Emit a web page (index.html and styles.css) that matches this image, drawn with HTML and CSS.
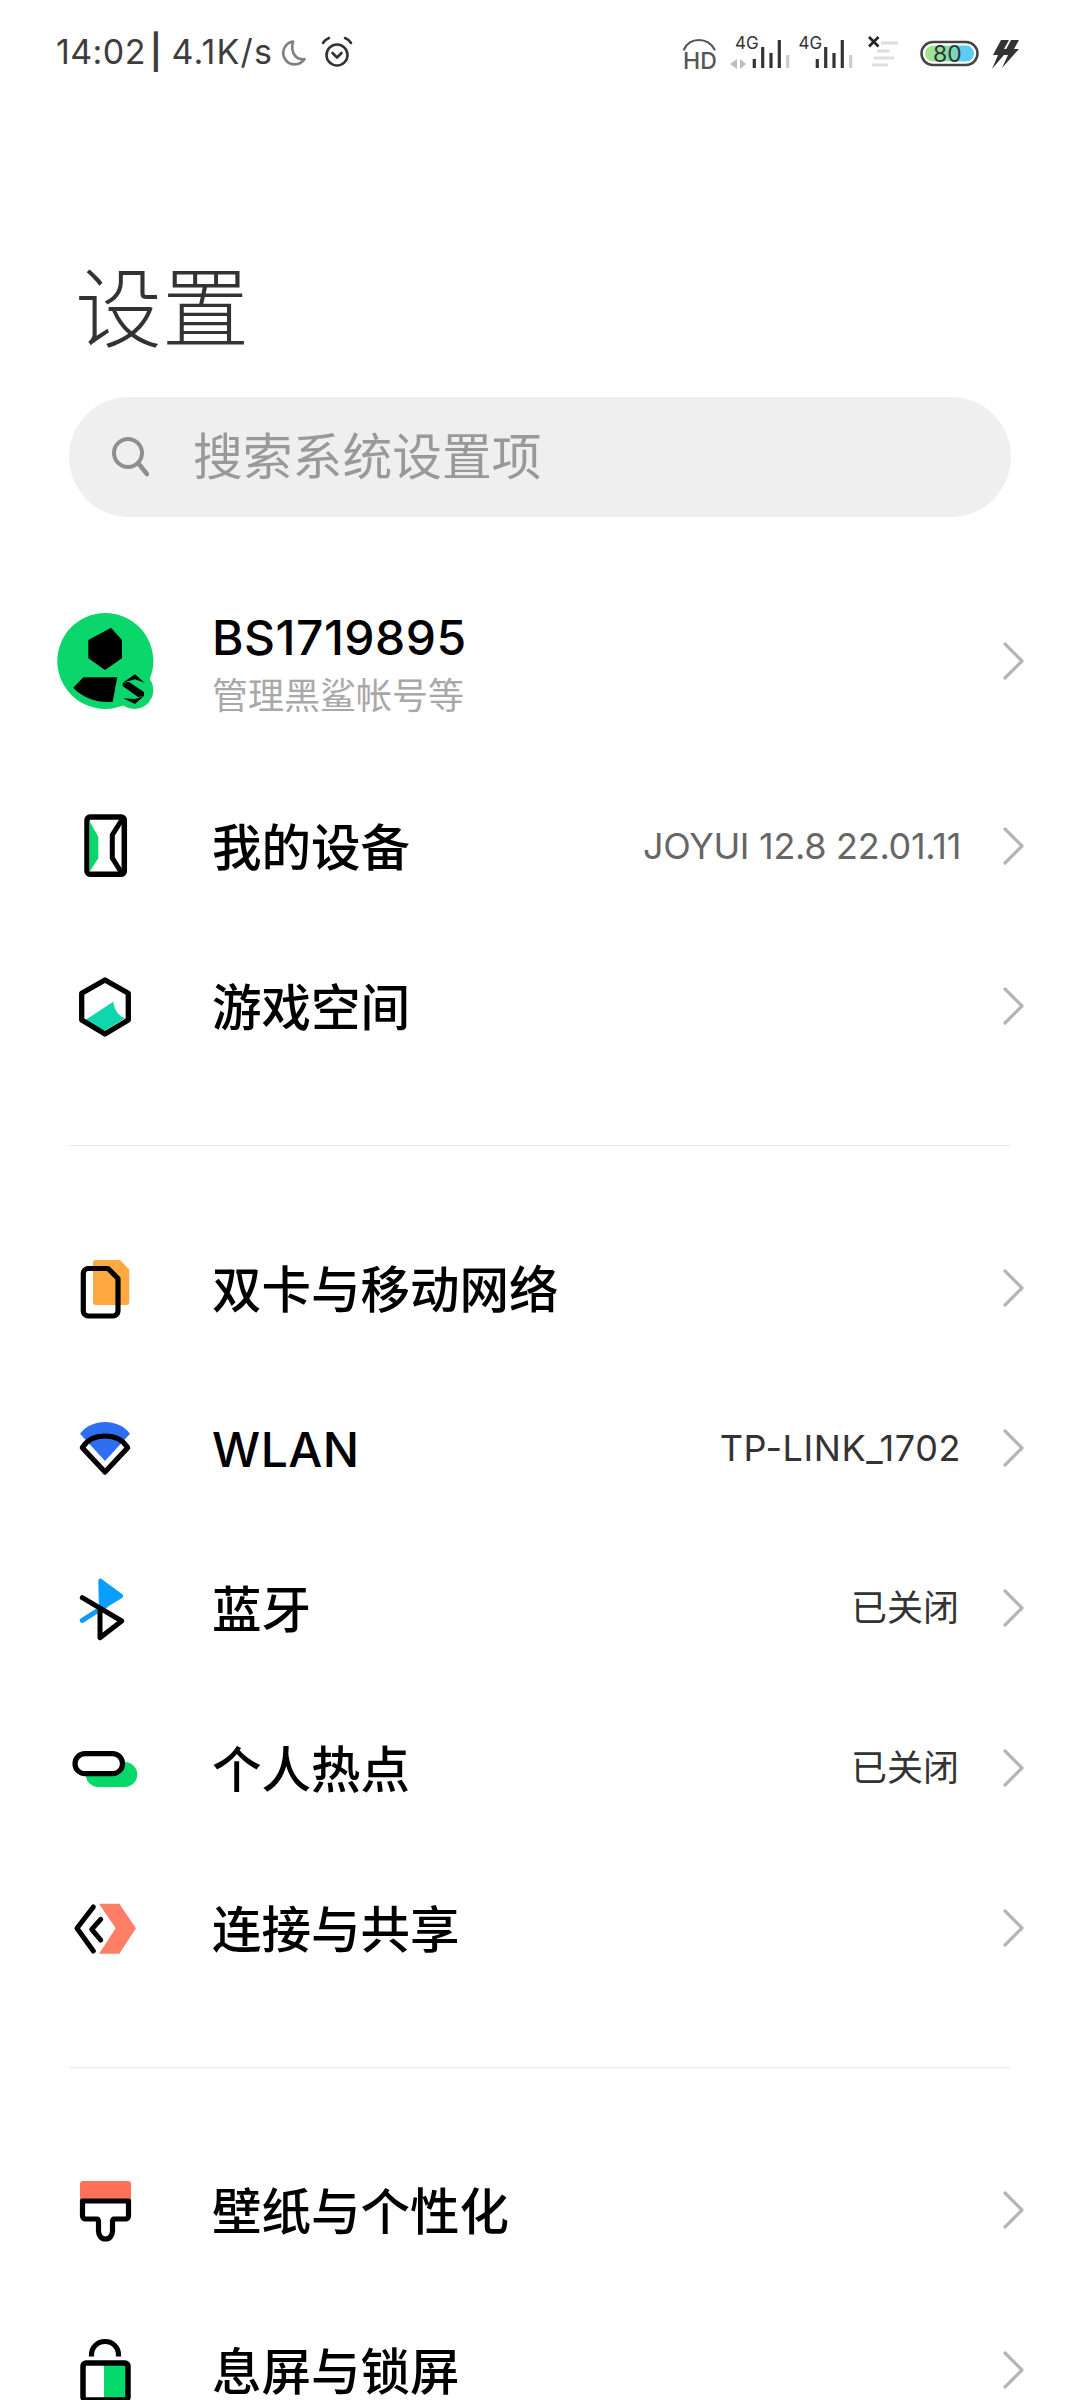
FILE: index.html
```html
<!DOCTYPE html>
<html lang="zh-CN">
<head>
<meta charset="utf-8">
<title>设置</title>
<link rel="stylesheet" href="styles.css">
</head>
<body>
<div class="page">
  <header class="status">
    <div class="status-left">
      <span class="status-text">14:02</span>
      <span class="status-text status-sep">|</span>
      <span class="status-text status-speed">4.1K/s</span>
      <svg class="st-moon" viewBox="270 36 30 32"><path d="M284 41.5a11.5 11.5 0 1 0 11.5 17.5c-8 1.500-14.500-6-11.500-17.500z" fill="none" stroke="#808080" stroke-width="2.600" stroke-linejoin="round"/></svg>
      <svg class="st-alarm" viewBox="310 36 36 34"><circle cx="328" cy="56" r="10.500" fill="none" stroke="#333" stroke-width="2.600"/><path d="M323.500 54l4.500 4.500 4.500-4.500M314 44c1.500-2.500 3.500-4 6-5M342 44c-1.500-2.500-3.500-4-6-5" fill="none" stroke="#333" stroke-width="2.600" stroke-linecap="round" stroke-linejoin="round"/></svg>
    </div>
    <div class="status-right">
      <svg class="st-hd" viewBox="680 20 40 60"><path d="M684 47.500c3-6.500 8.500-9.500 15-9.500s12 3 15.500 9.500" fill="none" stroke="#555" stroke-width="2.200" stroke-linecap="round"/><text x="683" y="67" class="st-label st-label-hd">HD</text></svg>
      <svg class="st-sig1" viewBox="725 20 70 60"><text x="735" y="47" class="st-label st-label-4g">4G</text><path d="M737 57v10l-7-5zM740 57v10l6-5z" fill="#bdbdbd"/><path d="M754.300 57v9M762.700 45v21M771 51v15M779.300 38v28" stroke="#333" stroke-width="3.200" fill="none"/><path d="M787.700 53v13" stroke="#ccc" stroke-width="3.200" fill="none"/></svg>
      <svg class="st-sig2" viewBox="795 20 62 60"><text x="798.500" y="47" class="st-label st-label-4g">4G</text><path d="M817.300 57v9M825.700 45v21M834 51v15M842.300 38v28" stroke="#333" stroke-width="3.200" fill="none"/><path d="M850.700 53v13" stroke="#ccc" stroke-width="3.200" fill="none"/></svg>
      <svg class="st-wifi" viewBox="862 20 40 60"><path d="M881 41h17M877 49h12.500M874 56h20M872 63h16" stroke="#dedede" stroke-width="2.800" fill="none"/><path d="M869 35l9.500 9.500M878.500 35l-9.500 9.500" stroke="#222" stroke-width="2.600" fill="none"/></svg>
      <svg class="st-batt" viewBox="916 20 66 60"><defs><linearGradient id="battfill" x1="0" x2="1" y1="0" y2="0"><stop offset="0" stop-color="#a5e58c"/><stop offset="0.55" stop-color="#7fdcae"/><stop offset="0.75" stop-color="#58cff2"/><stop offset="1" stop-color="#58cff2"/></linearGradient></defs><rect x="921.500" y="40" width="56" height="23" rx="11.500" fill="#fff" stroke="#444" stroke-width="2.500"/><rect x="925" y="43.500" width="49" height="16" rx="8" fill="url(#battfill)"/><text x="933" y="60" class="st-label st-label-batt">80</text></svg>
      <svg class="st-bolt" viewBox="988 20 34 60"><path d="M1001 38h8l-5 9h5l-17 20 6-14h-5zM1011 38h8l-5 9h5l-17 19 6-13h-5z" fill="#333"/></svg>
    </div>
  </header>

  <h1 class="page-title">设置</h1>

  <div class="search">
    <svg class="search-icon" viewBox="0 0 38 42"><circle cx="17" cy="17" r="14" fill="none" stroke="#8f8f8f" stroke-width="4"/><path d="M27 27l9 11" stroke="#8f8f8f" stroke-width="4.500" stroke-linecap="round"/></svg>
    <span class="search-text">搜索系统设置项</span>
  </div>

  <section class="group group-first">
    <div class="row row-account">
      <svg class="row-icon" viewBox="0 0 120 120">
        <circle cx="55.300" cy="60" r="48" fill="#0ad66c"/>
        <path d="M61 26.700l11 12.300v18.300L55 69 38.300 57.300V39z" fill="#000"/>
        <path d="M33.300 76.300h34l-4.600 24.400c-14 1.500-29-3-39.400-14z" fill="#000"/>
        <circle cx="84.300" cy="89" r="19" fill="#0ad66c"/>
        <path d="M72.700 81.700L85 73.300l9.700 8.400-9.700-3.400zM72.700 82l6.300-1 15 10v4l-6 1-15.300-11zM94 95l-9 8-11.700-5.700L85 98z" fill="#000"/>
      </svg>
      <div class="row-body row-body-account">
        <div class="row-title row-title-latin">BS1719895</div>
        <div class="row-sub">管理黑鲨帐号等</div>
      </div>
      <svg class="chevron" viewBox="0 0 24 40"><path d="M3 3l17 17L3 37" fill="none" stroke="#b5b5b5" stroke-width="3.200" stroke-linecap="round" stroke-linejoin="round"/></svg>
    </div>
    <div class="row">
      <svg class="row-icon" viewBox="0 0 120 120">
        <rect x="37" y="31" width="37.300" height="57.300" rx="3" fill="#fff" stroke="#000" stroke-width="5.500"/>
        <path d="M39.300 34.700l9 16v21.600l-9 14z" fill="#0ad66c"/>
        <path d="M71.700 34L62.300 49v23l9.400 15" fill="none" stroke="#000" stroke-width="5"/>
      </svg>
      <div class="row-body"><div class="row-title">我的设备</div></div>
      <span class="row-value row-value-muted">JOYUI 12.8 22.01.11</span>
      <svg class="chevron" viewBox="0 0 24 40"><path d="M3 3l17 17L3 37" fill="none" stroke="#b5b5b5" stroke-width="3.200" stroke-linecap="round" stroke-linejoin="round"/></svg>
    </div>
    <div class="row">
      <svg class="row-icon" viewBox="0 0 120 120">
        <path d="M34.300 74.700l29-19c1 8 5 14 11.700 16.600L55 84.700z" fill="#0fd6ac"/>
        <path d="M55 34l23.300 13.300V74L55 88 31.700 74V47.300z" fill="none" stroke="#000" stroke-width="5.300" stroke-linejoin="round"/>
      </svg>
      <div class="row-body"><div class="row-title">游戏空间</div></div>
      <svg class="chevron" viewBox="0 0 24 40"><path d="M3 3l17 17L3 37" fill="none" stroke="#b5b5b5" stroke-width="3.200" stroke-linecap="round" stroke-linejoin="round"/></svg>
    </div>
  </section>

  <hr class="divider">

  <section class="group">
    <div class="row">
      <svg class="row-icon" viewBox="0 0 120 120">
        <path d="M46 32h24l9.300 9.500V74a3 3 0 0 1-3 3H46a3 3 0 0 1-3-3V35a3 3 0 0 1 3-3z" fill="#ffa940"/>
        <path d="M37.500 40.500H58l10 10V83a5 5 0 0 1-5 5H38.300a5 5 0 0 1-5-5V45.500a5 5 0 0 1 5-5z" fill="none" stroke="#000" stroke-width="5.200" stroke-linejoin="round"/>
      </svg>
      <div class="row-body"><div class="row-title">双卡与移动网络</div></div>
      <svg class="chevron" viewBox="0 0 24 40"><path d="M3 3l17 17L3 37" fill="none" stroke="#b5b5b5" stroke-width="3.200" stroke-linecap="round" stroke-linejoin="round"/></svg>
    </div>
    <div class="row">
      <svg class="row-icon" viewBox="0 0 120 120">
        <path d="M30 45.700C36 38 45 34 55 34s19 4 25 11.700L55 73z" fill="#2e6ff2"/>
        <path d="M32.300 59.700C37 52 45 48 55 48s18 4 22.700 11.700L55 84z" fill="none" stroke="#000" stroke-width="5.200" stroke-linejoin="round"/>
      </svg>
      <div class="row-body"><div class="row-title row-title-latin">WLAN</div></div>
      <span class="row-value row-value-wide">TP-LINK_1702</span>
      <svg class="chevron" viewBox="0 0 24 40"><path d="M3 3l17 17L3 37" fill="none" stroke="#b5b5b5" stroke-width="3.200" stroke-linecap="round" stroke-linejoin="round"/></svg>
    </div>
    <div class="row">
      <svg class="row-icon" viewBox="0 0 120 120">
        <path d="M48.300 33c0-2 1.700-3 3.300-2l20.400 15c1.500 1 1.500 3 0 4L49 64z" fill="#0a9eff"/>
        <path d="M32.300 72.300L55 58" stroke="#0a9eff" stroke-width="5" stroke-linecap="round" fill="none"/>
        <path d="M32.300 49.700L71.700 73 50 89.700V61.300" fill="none" stroke="#000" stroke-width="5" stroke-linecap="round" stroke-linejoin="round"/>
      </svg>
      <div class="row-body"><div class="row-title">蓝牙</div></div>
      <span class="row-value row-value-cjk">已关闭</span>
      <svg class="chevron" viewBox="0 0 24 40"><path d="M3 3l17 17L3 37" fill="none" stroke="#b5b5b5" stroke-width="3.200" stroke-linecap="round" stroke-linejoin="round"/></svg>
    </div>
    <div class="row">
      <svg class="row-icon" viewBox="0 0 120 120">
        <rect x="35.700" y="54" width="51.600" height="25" rx="12.500" fill="#05d96b"/>
        <rect x="25" y="45.700" width="47.500" height="20" rx="10" fill="#fff" stroke="#000" stroke-width="5.200"/>
      </svg>
      <div class="row-body"><div class="row-title">个人热点</div></div>
      <span class="row-value row-value-cjk">已关闭</span>
      <svg class="chevron" viewBox="0 0 24 40"><path d="M3 3l17 17L3 37" fill="none" stroke="#b5b5b5" stroke-width="3.200" stroke-linecap="round" stroke-linejoin="round"/></svg>
    </div>
    <div class="row">
      <svg class="row-icon" viewBox="0 0 120 120">
        <path d="M49 35.700h20.300L86 60.300 69.300 85.700H49l16.700-25.400z" fill="#ff7f66"/>
        <path d="M43.300 39L27 60.300 43.300 83M50.700 51.300l-9 10 9 10.700" fill="none" stroke="#000" stroke-width="5" stroke-linecap="round" stroke-linejoin="round"/>
      </svg>
      <div class="row-body"><div class="row-title">连接与共享</div></div>
      <svg class="chevron" viewBox="0 0 24 40"><path d="M3 3l17 17L3 37" fill="none" stroke="#b5b5b5" stroke-width="3.200" stroke-linecap="round" stroke-linejoin="round"/></svg>
    </div>
  </section>

  <hr class="divider">

  <section class="group">
    <div class="row">
      <svg class="row-icon" viewBox="0 0 120 120">
        <path d="M33 31h45a3 3 0 0 1 3 3v17H30V34a3 3 0 0 1 3-3z" fill="#ff7259"/>
        <path d="M32.500 51v15a3 3 0 0 0 3 3h11.500c1.500 0 1.500 2 1.500 3v9c0 4.500 3 8 7 8s7-3.500 7-8v-9c0-1 0-3 1.500-3h11.500a3 3 0 0 0 3-3V51z" fill="none" stroke="#000" stroke-width="5.200" stroke-linejoin="round"/>
      </svg>
      <div class="row-body"><div class="row-title">壁纸与个性化</div></div>
      <svg class="chevron" viewBox="0 0 24 40"><path d="M3 3l17 17L3 37" fill="none" stroke="#b5b5b5" stroke-width="3.200" stroke-linecap="round" stroke-linejoin="round"/></svg>
    </div>
    <div class="row">
      <svg class="row-icon" viewBox="0 0 120 120">
        <path d="M41.500 46.500V45c0-8 6-13.500 13.500-13.500S68.500 37 68.500 45v1.500" fill="none" stroke="#000" stroke-width="5.200"/>
        <rect x="54" y="55" width="23" height="33" fill="#05d96b"/>
        <rect x="33" y="53" width="45" height="37" rx="3" fill="none" stroke="#000" stroke-width="5.500"/>
      </svg>
      <div class="row-body"><div class="row-title">息屏与锁屏</div></div>
      <svg class="chevron" viewBox="0 0 24 40"><path d="M3 3l17 17L3 37" fill="none" stroke="#b5b5b5" stroke-width="3.200" stroke-linecap="round" stroke-linejoin="round"/></svg>
    </div>
  </section>
</div>
</body>
</html>
```

FILE: styles.css
```css
* { box-sizing: border-box; }
html, body { margin: 0; padding: 0; background: #fff; }
body { font-family: Inter, "Noto Sans CJK SC", sans-serif; }
.page { width: 1080px; height: 2400px; overflow: hidden; background: #fff; }

.status { height: 100px; display: flex; justify-content: space-between; align-items: center; padding-top: 4px; }
.status-left { display: flex; align-items: center; margin-left: 56px; }
.status-text { font-size: 34px; color: #3d3d3d; line-height: 40px; white-space: pre; letter-spacing: 0.4px; }
.status-sep { font-weight: 600; margin-left: 4px; margin-right: 9px; }
.status-speed { letter-spacing: 1.2px; }
.st-moon { width: 30px; height: 32px; margin-left: 6px; }
.st-alarm { width: 36px; height: 34px; margin-left: 10px; }
.status-right { display: flex; align-items: center; margin-right: 58px; }
.st-hd { width: 40px; height: 60px; margin-right: 5px; }
.st-sig1 { width: 70px; height: 60px; }
.st-sig2 { width: 62px; height: 60px; margin-right: 5px; }
.st-wifi { width: 40px; height: 60px; margin-right: 14px; }
.st-batt { width: 66px; height: 60px; margin-right: 6px; }
.st-bolt { width: 34px; height: 60px; }
.st-label { font-family: Inter, sans-serif; }
.st-label-hd { font-size: 23px; font-weight: 500; fill: #555; }
.st-label-4g { font-size: 17px; fill: #333; }
.st-label-batt { font-size: 23px; fill: #333; }

.page-title { margin: 160px 0 0 75px; height: 137px; font-size: 87px; line-height: 100px; font-weight: 300; color: #333; }

.search { margin: 0 69px; height: 120px; border-radius: 60px; background: #efefef; display: flex; align-items: center; padding-left: 42px; }
.search-icon { width: 38px; height: 42px; flex: none; }
.search-text { margin-left: 44px; font-size: 49.800px; line-height: 60px; color: #999; }

.group-first { margin-top: 39px; }
.row { display: flex; align-items: center; height: 160px; padding-left: 50px; padding-right: 54px; }
.row-account { height: 210px; }
.row-icon { width: 120px; height: 120px; flex: none; margin-right: 42px; overflow: visible; }
.row-body { flex: 1; min-width: 0; }
.row-body-account { padding-top: 5px; }
.row-title { font-size: 49.500px; line-height: 60px; padding-top: 3px; font-weight: 500; color: #000; box-sizing: content-box; }
.row-title-latin { font-size: 48px; letter-spacing: 0.5px; }
.row-body-account .row-title { padding-top: 0; }
.row-sub { font-size: 36px; line-height: 46px; margin-top: 5px; color: #a8a8a8; }
.row-value { font-size: 36px; line-height: 46px; color: #333; margin-right: 41px; white-space: nowrap; }
.row-value-muted { color: #666; letter-spacing: -0.3px; }
.row-value-wide { letter-spacing: 0.6px; }
.row-value-cjk { margin-right: 43px; }
.chevron { width: 24px; height: 40px; flex: none; }

.divider { margin: 59px 70px 62px 69px; height: 1px; border: 0; background: #e8e8e8; }
```
